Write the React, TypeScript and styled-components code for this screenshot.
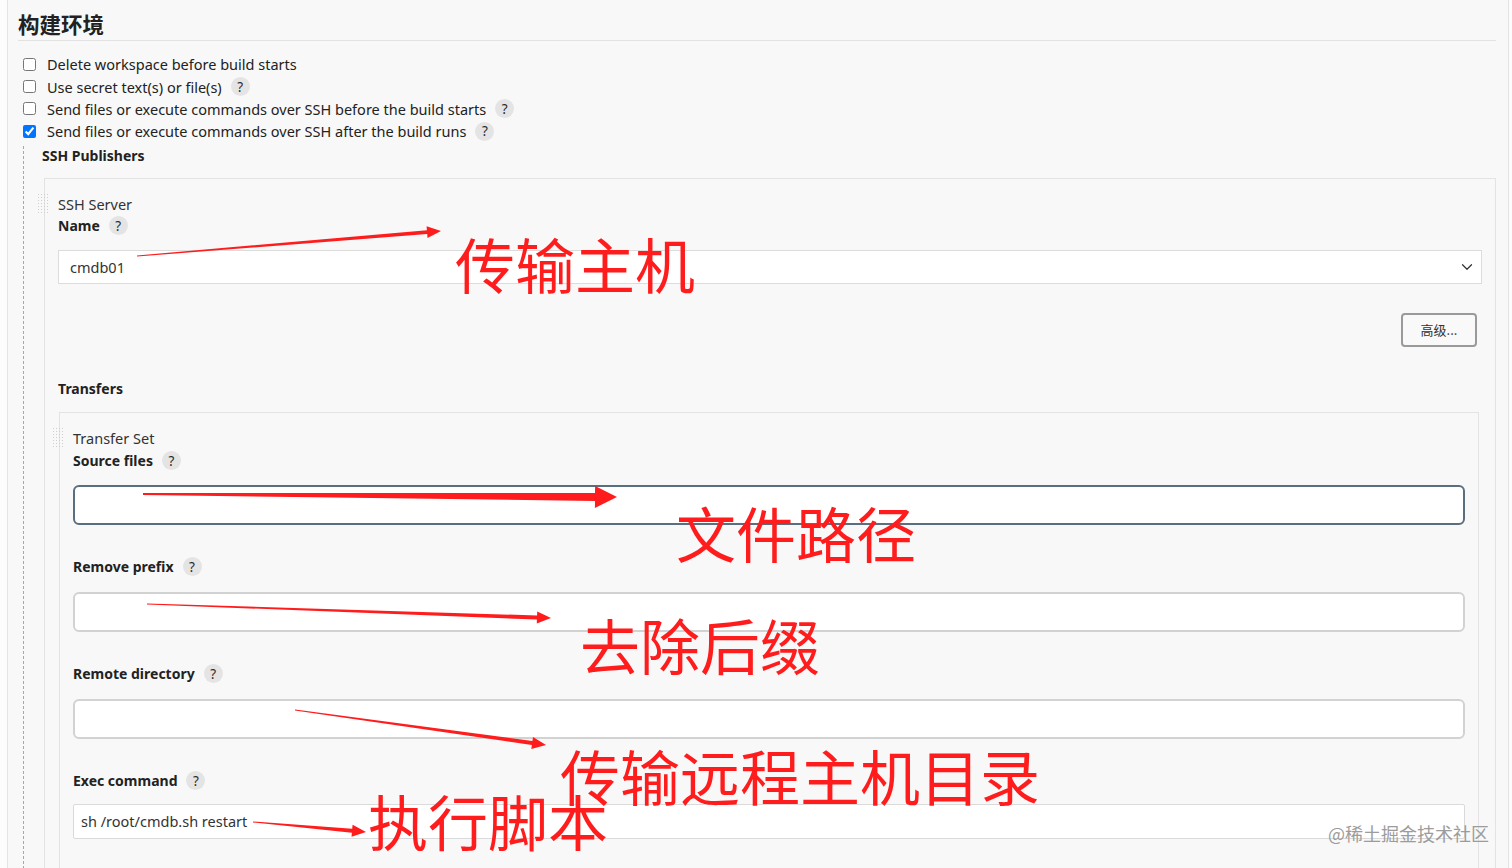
import React from 'react';
import styled, { createGlobalStyle } from 'styled-components';
import { ChevronDown } from 'lucide-react';

const GlobalStyle = createGlobalStyle`
  html, body {
    margin: 0;
    padding: 0;
    background: #fcfcfc;
    overflow: hidden;
  }
  body {
    font-family: 'Noto Sans', 'Noto Sans CJK SC', sans-serif;
    color: #333;
  }
`;

const Page = styled.div`
  position: relative;
  width: 1512px;
  height: 868px;
  overflow: hidden;
`;

const Section = styled.section`
  margin-left: 7px;
  width: 1478px;
  min-height: 900px;
  padding: 9px 12px 0 10px;
  background: #f8f8f8;
  border-left: 1px solid #e4e4e4;
  border-right: 1px solid #e4e4e4;
`;

const Heading = styled.h2`
  margin: 0;
  font-family: 'Noto Sans CJK SC', sans-serif;
  font-size: 21.5px;
  font-weight: 700;
  line-height: 30px;
  padding-bottom: 1px;
  color: #222;
  border-bottom: 1px solid #e2e2e2;
`;

const CheckList = styled.div`
  margin-top: 12px;
  display: flex;
  flex-direction: column;
`;

const CheckRow = styled.label`
  display: flex;
  align-items: center;
  height: 22.4px;
  padding-left: 5px;
  font-size: 14.5px;
  color: #222;
`;

const Check = styled.input`
  margin: 0 11px 0 0;
  width: 13px;
  height: 13px;
`;

const Help = styled.span`
  display: inline-flex;
  align-items: center;
  justify-content: center;
  width: 19px;
  height: 19px;
  margin-left: 9px;
  border-radius: 50%;
  background: #e4e4e4;
  color: #2a2a2a;
  font-size: 13.5px;
  font-weight: 400;
`;

const Nested = styled.div`
  margin: 3px 0 0 5px;
  padding-left: 18px;
  border-left: 1px dashed #a8a8a8;
  padding-bottom: 40px;
`;

const SubTitle = styled.div`
  font-size: 14px;
  font-weight: 700;
  line-height: 20px;
  color: #222;
`;

const RepeatBox = styled.div<{ $left: number; $right: number; $top: number }>`
  position: relative;
  margin: ${({ $top }) => $top}px ${({ $right }) => $right}px 0 ${({ $left }) => $left}px;
  padding: 14px 13px 30px 13px;
  border: 1px solid #e3e3e3;
  border-bottom: none;
`;

const Handle = styled.div`
  position: absolute;
  left: -8px;
  top: 14px;
  width: 12px;
  height: 21px;
  background-image: radial-gradient(circle, #cfcfcf 0.9px, transparent 1px);
  background-size: 3px 3px;
`;

const ItemTitle = styled.div<{ $height: number }>`
  font-size: 14.5px;
  line-height: ${({ $height }) => $height}px;
  color: #333;
`;

const FieldLabel = styled.div`
  display: flex;
  align-items: center;
  height: 22px;
  font-size: 14px;
  font-weight: 700;
  color: #222;
`;

const SelectBox = styled.div`
  margin-top: 13px;
  height: 34px;
  box-sizing: border-box;
  display: flex;
  align-items: center;
  justify-content: space-between;
  padding: 0 5px 0 11px;
  background: #fff;
  border: 1px solid #dcdcdc;
  font-size: 14.5px;
  color: #333;
`;

const ButtonRow = styled.div`
  display: flex;
  justify-content: flex-end;
  margin: 29px 5px 31px 0;
`;

const AdvancedButton = styled.button`
  width: 76px;
  height: 34px;
  border: 2px solid #9a9a9a;
  border-radius: 4px;
  background: #f9f9f9;
  font-family: 'Noto Sans CJK SC', sans-serif;
  font-size: 13px;
  color: #333;
`;

const Field = styled.div<{ $gap: number }>`
  margin-bottom: ${({ $gap }) => $gap}px;
`;

const TextInput = styled.div<{ $focused?: boolean }>`
  margin-top: ${({ $focused }) => ($focused ? 13 : 14)}px;
  height: 40px;
  box-sizing: border-box;
  background: #fff;
  border: 2px solid ${({ $focused }) => ($focused ? '#5b6e80' : '#d2d2d2')};
  border-radius: 6px;
`;

const CommandBox = styled.div`
  margin-top: 12px;
  height: 35px;
  box-sizing: border-box;
  display: flex;
  align-items: center;
  padding-left: 7px;
  background: #fff;
  border: 1px solid #dadada;
  border-radius: 2px;
  font-size: 14.5px;
  color: #333;
`;

const Overlay = styled.div`
  position: absolute;
  inset: 0;
  pointer-events: none;
`;

const ArrowLayer = styled.svg`
  position: absolute;
  left: 0;
  top: 0;
`;

const Note = styled.div<{ $left: number; $top: number }>`
  position: absolute;
  left: ${({ $left }) => $left}px;
  top: ${({ $top }) => $top}px;
  font-family: 'Noto Sans CJK SC', sans-serif;
  font-size: 60px;
  line-height: 60px;
  font-weight: 400;
  color: #ff1c1c;
  white-space: nowrap;
`;

const Watermark = styled.div`
  position: absolute;
  left: 1328px;
  top: 820px;
  font-family: 'Noto Sans CJK SC', sans-serif;
  font-size: 18px;
  line-height: 26px;
  color: #9c9c9c;
  white-space: nowrap;
`;

type Arrow = { x0: number; y0: number; x1: number; y1: number; w0: number; w1: number; hl: number; hw: number };

const arrows: Arrow[] = [
  { x0: 137, y0: 256, x1: 441, y1: 231, w0: 1, w1: 4, hl: 14, hw: 12 },
  { x0: 143, y0: 494, x1: 617, y1: 497, w0: 2, w1: 8, hl: 22, hw: 22 },
  { x0: 147, y0: 604, x1: 551, y1: 618, w0: 1, w1: 4, hl: 14, hw: 12 },
  { x0: 295, y0: 710, x1: 546, y1: 745, w0: 1, w1: 4, hl: 14, hw: 12 },
  { x0: 253, y0: 822, x1: 366, y1: 832, w0: 1, w1: 4, hl: 14, hw: 12 },
];

// tapered shaft + head, as one polygon
function arrowPoints({ x0, y0, x1, y1, w0, w1, hl, hw }: Arrow) {
  const len = Math.hypot(x1 - x0, y1 - y0);
  const dx = (x1 - x0) / len;
  const dy = (y1 - y0) / len;
  const nx = -dy;
  const ny = dx;
  const bx = x1 - dx * hl;
  const by = y1 - dy * hl;
  const pts = [
    [x0 + (nx * w0) / 2, y0 + (ny * w0) / 2],
    [bx + (nx * w1) / 2, by + (ny * w1) / 2],
    [bx + (nx * hw) / 2, by + (ny * hw) / 2],
    [x1, y1],
    [bx - (nx * hw) / 2, by - (ny * hw) / 2],
    [bx - (nx * w1) / 2, by - (ny * w1) / 2],
    [x0 - (nx * w0) / 2, y0 - (ny * w0) / 2],
  ];
  return pts.map(p => p.map(v => v.toFixed(1)).join(',')).join(' ');
}

const notes = [
  { text: '传输主机', left: 455, top: 233 },
  { text: '文件路径', left: 676, top: 502 },
  { text: '去除后缀', left: 580, top: 614 },
  { text: '传输远程主机目录', left: 560, top: 745 },
  { text: '执行脚本', left: 368, top: 790 },
];

const options = [
  { label: 'Delete workspace before build starts', help: false, checked: false },
  { label: 'Use secret text(s) or file(s)', help: true, checked: false },
  { label: 'Send files or execute commands over SSH before the build starts', help: true, checked: false },
  { label: 'Send files or execute commands over SSH after the build runs', help: true, checked: true },
];

export default function App() {
  return (
    <Page>
      <GlobalStyle />
      <Section>
        <Heading>构建环境</Heading>
        <CheckList>
          {options.map(o => (
            <CheckRow key={o.label}>
              <Check type="checkbox" defaultChecked={o.checked} />
              {o.label}
              {o.help && <Help>?</Help>}
            </CheckRow>
          ))}
        </CheckList>
        <Nested>
          <SubTitle>SSH Publishers</SubTitle>
          <RepeatBox $left={2} $right={0} $top={12}>
            <Handle />
            <ItemTitle $height={22}>SSH Server</ItemTitle>
            <FieldLabel>
              Name <Help>?</Help>
            </FieldLabel>
            <SelectBox>
              cmdb01
              <ChevronDown size={18} strokeWidth={1.6} color="#333" />
            </SelectBox>
            <ButtonRow>
              <AdvancedButton>高级...</AdvancedButton>
            </ButtonRow>
            <FieldLabel>Transfers</FieldLabel>
            <RepeatBox $left={1} $right={3} $top={12}>
              <Handle />
              <ItemTitle $height={23}>Transfer Set</ItemTitle>
              <Field $gap={31}>
                <FieldLabel>
                  Source files <Help>?</Help>
                </FieldLabel>
                <TextInput $focused />
              </Field>
              <Field $gap={31}>
                <FieldLabel>
                  Remove prefix <Help>?</Help>
                </FieldLabel>
                <TextInput />
              </Field>
              <Field $gap={31}>
                <FieldLabel>
                  Remote directory <Help>?</Help>
                </FieldLabel>
                <TextInput />
              </Field>
              <Field $gap={20}>
                <FieldLabel>
                  Exec command <Help>?</Help>
                </FieldLabel>
                <CommandBox>sh /root/cmdb.sh restart</CommandBox>
              </Field>
            </RepeatBox>
          </RepeatBox>
        </Nested>
      </Section>
      <Overlay>
        <ArrowLayer width={1512} height={868}>
          {arrows.map((a, i) => (
            <polygon key={i} points={arrowPoints(a)} fill="#ff1c1c" />
          ))}
        </ArrowLayer>
        {notes.map(n => (
          <Note key={n.text + n.left} $left={n.left} $top={n.top}>
            {n.text}
          </Note>
        ))}
        <Watermark>@稀土掘金技术社区</Watermark>
      </Overlay>
    </Page>
  );
}
